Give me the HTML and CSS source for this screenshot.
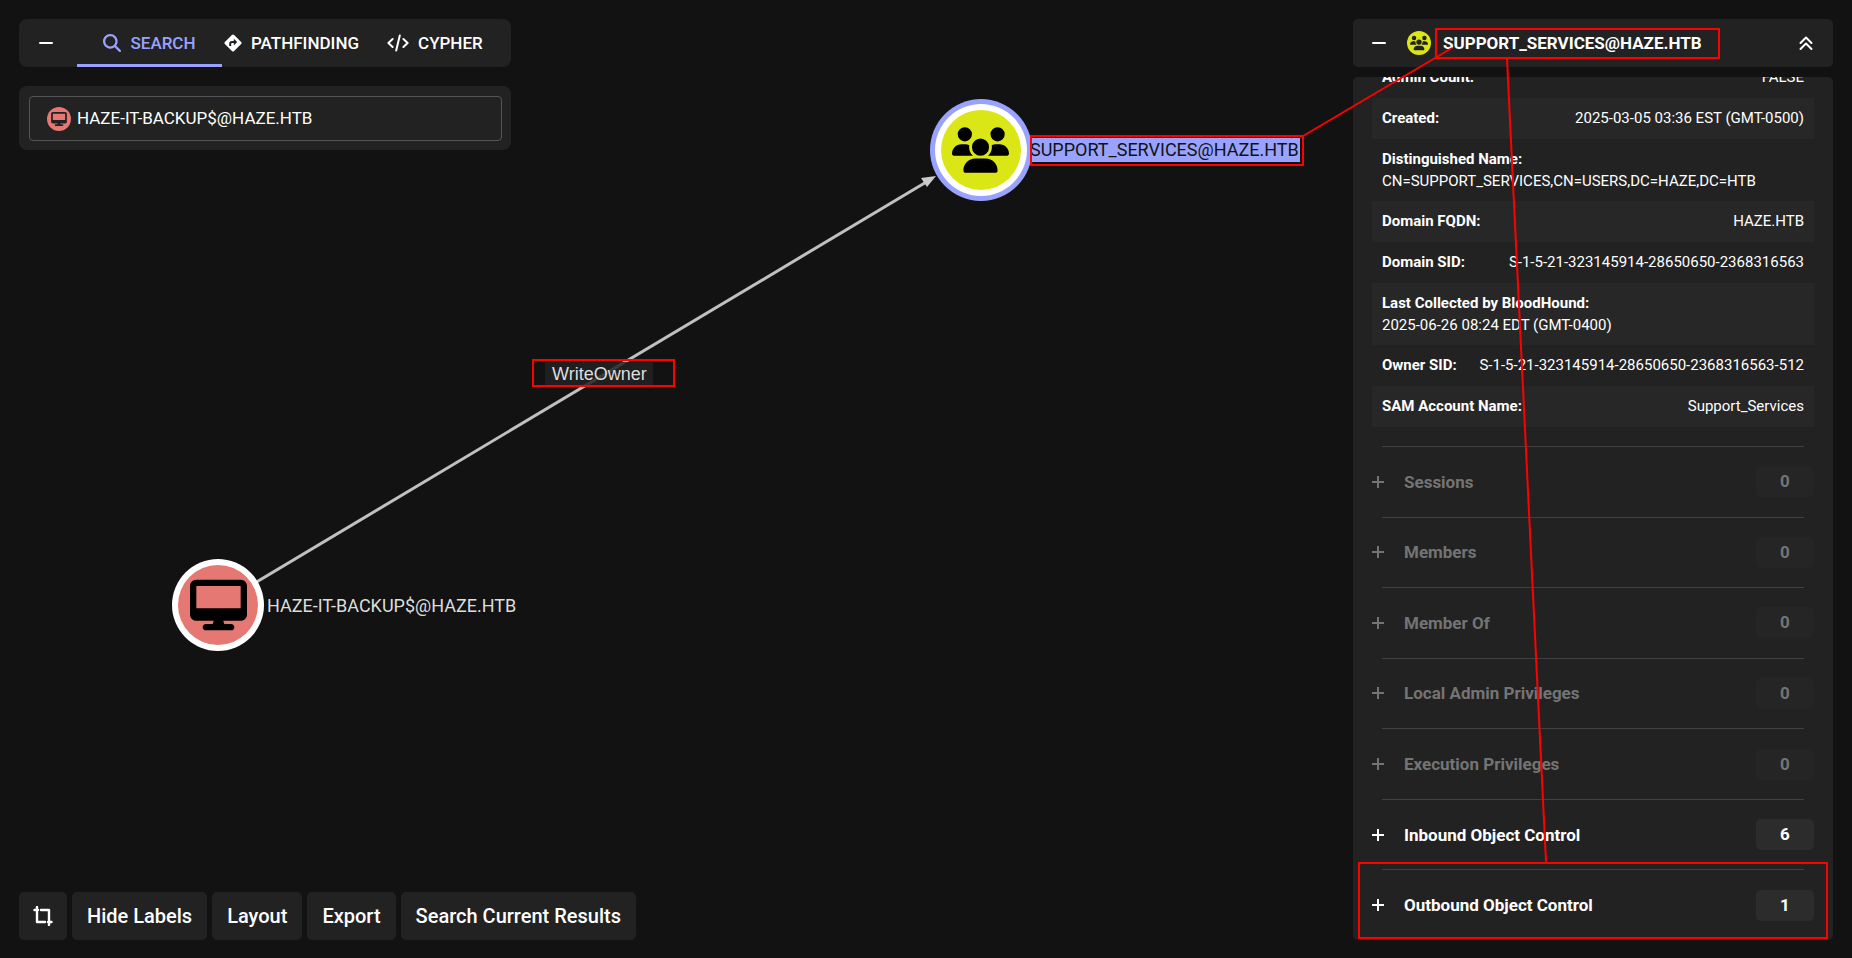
FILE: index.html
```html
<!DOCTYPE html>
<html lang="en">
<head>
<meta charset="utf-8">
<title>Explore</title>
<link rel="stylesheet" href="styles.css">
</head>
<body>
<svg class="defs" aria-hidden="true">
  <symbol id="users" viewBox="0 0 640 512"><path d="M144 0a80 80 0 1 1 0 160A80 80 0 1 1 144 0zM512 0a80 80 0 1 1 0 160A80 80 0 1 1 512 0zM0 298.7C0 239.8 47.8 192 106.7 192h42.7c15.9 0 31 3.5 44.6 9.7c-1.3 7.2-1.9 14.7-1.9 22.3c0 38.2 16.8 72.5 43.3 96c-.2 0-.4 0-.7 0H21.3C9.6 320 0 310.4 0 298.7zM405.3 320c-.2 0-.4 0-.7 0c26.6-23.5 43.3-57.8 43.3-96c0-7.6-.7-15-1.9-22.3c13.6-6.3 28.7-9.7 44.6-9.7h42.7C592.2 192 640 239.8 640 298.7c0 11.8-9.6 21.3-21.3 21.3H405.3zM224 224a96 96 0 1 1 192 0 96 96 0 1 1 -192 0zM128 485.3C128 411.7 187.7 352 261.3 352H378.7C452.3 352 512 411.7 512 485.3c0 14.7-11.9 26.7-26.7 26.7H154.7c-14.7 0-26.7-11.9-26.7-26.7z"/></symbol>
  <symbol id="desktop" viewBox="0 0 576 512"><path d="M64 0C28.7 0 0 28.7 0 64V352c0 35.3 28.7 64 64 64H240l-10.7 32H160c-17.7 0-32 14.3-32 32s14.3 32 32 32H416c17.7 0 32-14.3 32-32s-14.3-32-32-32H346.7L336 416H512c35.3 0 64-28.7 64-64V64c0-35.3-28.7-64-64-64H64zM512 64V288H64V64H512z"/></symbol>
  <symbol id="search" viewBox="0 0 512 512"><path d="M416 208c0 45.9-14.9 88.3-40 122.7L502.6 457.4c12.5 12.5 12.5 32.8 0 45.3s-32.8 12.5-45.3 0L330.7 376c-34.4 25.2-76.8 40-122.7 40C93.1 416 0 322.9 0 208S93.1 0 208 0S416 93.1 416 208zM208 352a144 144 0 1 0 0-288 144 144 0 1 0 0 288z"/></symbol>
  <symbol id="turn" viewBox="0 0 18 18"><path d="M7.900.9a1.600 1.600 0 0 1 2.200 0l7 7a1.600 1.600 0 0 1 0 2.200l-7 7a1.600 1.600 0 0 1-2.200 0l-7-7a1.600 1.600 0 0 1 0-2.200z"/><path class="cut" d="M6.200 12V9.900a1.800 1.800 0 0 1 1.800-1.800h3.200"/><path class="cut-fill" d="M9.800 4.800 13.200 8.100 9.800 11.400z"/></symbol>
  <symbol id="code" viewBox="0 0 22 18"><path class="line" d="M5.600 5 1.400 9l4.200 4M16.400 5l4.200 4-4.200 4M12.800 1.400 9.200 16.600"/></symbol>
  <symbol id="minus" viewBox="0 0 14 14"><path class="line" d="M1 7h12"/></symbol>
  <symbol id="plus" viewBox="0 0 12 12"><path class="thin" d="M0 6h12M6 0v12"/></symbol>
  <symbol id="up" viewBox="0 0 14 16"><path class="line" d="M1.500 8 7 2.500 12.500 8M1.500 14 7 8.500l5.500 5.500"/></symbol>
  <symbol id="crop" viewBox="0 0 20 20"><path class="line bold" d="M1.500 4H5M8 4h8v15M4 1v15h8M15 16h3.500"/></symbol>
</svg>

<svg class="graph" role="img" aria-label="Graph">
  <line class="edge" x1="218" y1="605" x2="928" y2="181"/>
  <path class="arrow" d="M936 176 921 178 927 187z"/>
  <rect class="edge-bg" x="545" y="362" width="108" height="24"/>
  <text class="edge-label" x="552" y="380">WriteOwner</text>
  <circle class="white" cx="218" cy="605" r="46"/>
  <circle class="red" cx="218" cy="605" r="40"/>
  <use href="#desktop" x="190" y="579" width="57" height="52"/>
  <text class="node-label" x="267" y="612">HAZE-IT-BACKUP$@HAZE.HTB</text>
  <circle class="halo" cx="981" cy="150" r="51"/>
  <circle class="white" cx="981" cy="150" r="46"/>
  <circle class="yellow" cx="981" cy="150" r="40"/>
  <use href="#users" x="952" y="127" width="57" height="46"/>
  <rect class="halo" x="1031" y="138" width="269" height="24"/>
  <text class="node-label selected" x="1030" y="156">SUPPORT_SERVICES@HAZE.HTB</text>
</svg>

<div class="app">
  <main class="left">
    <section class="search-area">
      <nav class="card tabs">
        <button class="toggle" aria-label="Collapse"><svg class="i14"><use href="#minus"/></svg></button>
        <button class="tab active"><svg class="i18"><use href="#search"/></svg>SEARCH</button>
        <button class="tab"><svg class="i18"><use href="#turn"/></svg>PATHFINDING</button>
        <button class="tab"><svg class="i22"><use href="#code"/></svg>CYPHER</button>
      </nav>
      <div class="card query">
        <label class="field">
          <span class="dot red-dot"><svg class="i16"><use href="#desktop"/></svg></span>
          <input type="text" aria-label="Search nodes" value="HAZE-IT-BACKUP$@HAZE.HTB">
        </label>
      </div>
    </section>
    <div class="toolbar">
      <button class="tool square" aria-label="Reset view"><svg class="i20"><use href="#crop"/></svg></button>
      <button class="tool">Hide Labels</button>
      <button class="tool">Layout</button>
      <button class="tool">Export</button>
      <button class="tool">Search Current Results</button>
    </div>
  </main>

  <aside class="right">
    <header class="card info-head">
      <button class="toggle" aria-label="Collapse panel"><svg class="i14"><use href="#minus"/></svg></button>
      <span class="dot yellow-dot"><svg class="i18"><use href="#users"/></svg></span>
      <h1>SUPPORT_SERVICES@HAZE.HTB</h1>
      <button class="toggle" aria-label="Collapse all"><svg class="i14 tall"><use href="#up"/></svg></button>
    </header>
    <div class="card info-body">
      <dl class="props">
        <div><dt>Admin Count:</dt><dd>FALSE</dd></div>
        <div><dt>Created:</dt><dd>2025-03-05 03:36 EST (GMT-0500)</dd></div>
        <div class="stacked"><dt>Distinguished Name:</dt><dd>CN=SUPPORT_SERVICES,CN=USERS,DC=HAZE,DC=HTB</dd></div>
        <div><dt>Domain FQDN:</dt><dd>HAZE.HTB</dd></div>
        <div><dt>Domain SID:</dt><dd>S-1-5-21-323145914-28650650-2368316563</dd></div>
        <div class="stacked"><dt>Last Collected by BloodHound:</dt><dd>2025-06-26 08:24 EDT (GMT-0400)</dd></div>
        <div><dt>Owner SID:</dt><dd>S-1-5-21-323145914-28650650-2368316563-512</dd></div>
        <div><dt>SAM Account Name:</dt><dd>Support_Services</dd></div>
      </dl>
      <div class="sections">
        <section><hr><button class="section" disabled><svg class="i12"><use href="#plus"/></svg><span class="name">Sessions</span><span class="count">0</span></button></section>
        <section><hr><button class="section" disabled><svg class="i12"><use href="#plus"/></svg><span class="name">Members</span><span class="count">0</span></button></section>
        <section><hr><button class="section" disabled><svg class="i12"><use href="#plus"/></svg><span class="name">Member Of</span><span class="count">0</span></button></section>
        <section><hr><button class="section" disabled><svg class="i12"><use href="#plus"/></svg><span class="name">Local Admin Privileges</span><span class="count">0</span></button></section>
        <section><hr><button class="section" disabled><svg class="i12"><use href="#plus"/></svg><span class="name">Execution Privileges</span><span class="count">0</span></button></section>
        <section><hr><button class="section"><svg class="i12"><use href="#plus"/></svg><span class="name">Inbound Object Control</span><span class="count">6</span></button></section>
        <section><hr><button class="section"><svg class="i12"><use href="#plus"/></svg><span class="name">Outbound Object Control</span><span class="count">1</span></button></section>
      </div>
    </div>
  </aside>
</div>

<svg class="marks" aria-hidden="true">
  <rect x="533" y="360" width="141" height="26"/>
  <rect x="1031" y="136" width="272" height="29"/>
  <rect x="1436" y="29" width="283" height="29"/>
  <rect x="1359" y="863" width="468" height="75"/>
  <path d="M1452 48 1303 136M1507 59l39 803"/>
</svg>
</body>
</html>
```
FILE: styles.css
```css
* { box-sizing: border-box; }
body {
  margin: 0;
  background: #121212;
  color: #fff;
  font-family: Roboto, "Liberation Sans", sans-serif;
  font-size: 17px;
  overflow: hidden;
}
button {
  border: 0;
  padding: 0;
  background: none;
  color: inherit;
  font: inherit;
}
.defs { display: none; }
svg { flex: none; fill: currentColor; }
.line, .thin { fill: none; stroke: currentColor; stroke-width: 2; stroke-linecap: round; stroke-linejoin: round; }
.line.bold { stroke-width: 2.4; }
.thin { stroke-linecap: butt; }
.cut { fill: none; stroke: #222; stroke-width: 2; }
.cut-fill { fill: #222; }
.i12 { width: 12px; height: 12px; }
.i14 { width: 14px; height: 14px; }
.i14.tall { height: 16px; }
.i16 { width: 16px; height: 14px; }
.i18 { width: 18px; height: 18px; }
.i20 { width: 20px; height: 20px; }
.i22 { width: 22px; height: 18px; }

.graph, .marks { position: absolute; inset: 0; width: 100%; height: 100%; }
.marks { pointer-events: none; fill: none; stroke: #f00; stroke-width: 2; }
.graph { fill: #000; }
.edge { stroke: #c0c0c0; stroke-width: 3; }
.arrow { fill: #ccc; }
.edge-bg { fill: #222; fill-opacity: 0.85; }
.edge-label { fill: #ddd; font-family: "Liberation Sans", Arial, sans-serif; font-size: 18px; }
.node-label { fill: #ddd; font-size: 18px; }
.node-label.selected { fill: #121212; }
.white { fill: #fff; }
.red { fill: #e67873; }
.yellow { fill: #dbe617; }
.halo { fill: #99a3ff; }

.app {
  position: relative;
  display: flex;
  justify-content: space-between;
  height: 100vh;
  padding: 19px 19px 18px;
  pointer-events: none;
}
.app button, .app input { pointer-events: auto; }
.card { background: #222; border-radius: 8px; }
.left { display: flex; flex-direction: column; justify-content: space-between; }
.search-area { width: 492px; }
.tabs { display: flex; align-items: center; height: 48px; overflow: hidden; font-weight: 500; }
.toggle { display: flex; align-items: center; justify-content: center; }
.tabs .toggle { width: 58px; padding-right: 4px; }
.tab { display: flex; align-items: center; justify-content: center; gap: 9px; height: 48px; }
.tab.active { width: 145px; color: #99a3ff; border-bottom: 3px solid #99a3ff; border-top: 3px solid transparent; }
.tab + .tab { padding: 0 26px 0 2px; }
.query { margin-top: 19px; padding: 10px 9px 9px 10px; }
.field {
  display: flex;
  align-items: center;
  gap: 6px;
  height: 45px;
  padding: 0 17px;
  border: 1px solid #555;
  border-radius: 4px;
}
.field input {
  flex: 1;
  min-width: 0;
  height: 24px;
  padding: 0 0 2px;
  border: 0;
  outline: 0;
  background: none;
  color: inherit;
  font: inherit;
}
.dot { display: flex; flex: none; align-items: center; justify-content: center; width: 24px; height: 24px; border-radius: 50%; color: #222; }
.red-dot { background: #e67873; }
.yellow-dot { background: #dbe617; }
.toolbar { display: flex; gap: 5px; }
.tool { height: 48px; padding: 0 15px; border-radius: 5px; background: #222; font-size: 20px; font-weight: 500; }
.tool.square { display: flex; align-items: center; padding: 0 14px; }

.right { display: flex; flex-direction: column; gap: 10px; width: 480px; min-height: 0; }
.right .card { border-radius: 5px; }
.info-head { display: flex; align-items: center; height: 48px; padding: 0 20px 0 19px; }
.info-head .dot { margin: 0 12px 0 21px; }
.info-head h1 { flex: 1; margin: 0; font-size: 17px; font-weight: 700; }
.info-body { display: flex; flex: 1; flex-direction: column; min-height: 0; overflow: hidden; padding: 0 19px; }
.props { margin: -20px 0 19px; font-size: 15px; line-height: 21px; }
.props div { display: flex; justify-content: space-between; padding: 10px; }
.props div:nth-child(even) { background: #272727; }
.props div.stacked { display: block; padding-bottom: 9px; }
.props dt { font-weight: 700; }
.props dd { margin: 0; }
.props .stacked dd { margin-top: 1px; }
.sections { display: grid; flex: 1; grid-auto-rows: 1fr; }
.sections section { display: flex; flex-direction: column; }
.sections hr { width: auto; height: 1px; margin: 0 10px; border: 0; background: #414141; }
.section { display: flex; flex: 1; align-items: center; font-weight: 700; }
.section:disabled { color: #747474; }
.name { flex: 1; margin-left: 20px; text-align: left; }
.count { width: 58px; padding: 5px 0; border-radius: 5px; background: #2c2c2c; line-height: 21px; text-align: center; }
:disabled .count { background: #252525; }
```
